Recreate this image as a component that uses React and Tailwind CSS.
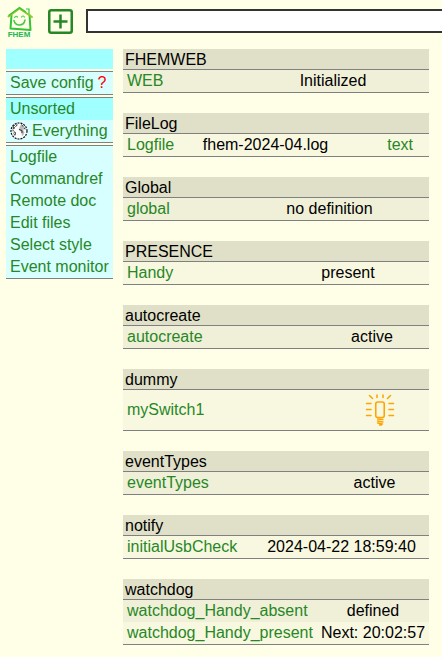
const groups = [
  { title: "FHEMWEB", col: "w-[192px]", rows: [{ name: "WEB", state: "Initialized" }] },
  { title: "FileLog", col: "w-[173px]", rows: [{ name: "Logfile", state: "fhem-2024-04.log", link: "text" }] },
  { title: "Global", col: "w-[199px]", rows: [{ name: "global", state: "no definition" }] },
  { title: "PRESENCE", col: "w-[162px]", rows: [{ name: "Handy", state: "present" }] },
  { title: "autocreate", col: "w-[114px]", rows: [{ name: "autocreate", state: "active" }] },
  { title: "dummy", col: "w-[98px]", rows: [{ name: "mySwitch1", bulb: true }] },
  { title: "eventTypes", col: "w-[109px]", rows: [{ name: "eventTypes", state: "active" }] },
  { title: "notify", col: "w-[175px]", rows: [{ name: "initialUsbCheck", state: "2024-04-22 18:59:40" }] },
  {
    title: "watchdog",
    col: "w-[112px]",
    rows: [
      { name: "watchdog_Handy_absent", state: "defined" },
      { name: "watchdog_Handy_present", state: "Next: 20:02:57" },
    ],
  },
];

function Logo() {
  return (
    <svg width="28" height="32" viewBox="0 0 28 32" fill="none" role="img" aria-label="FHEM">
      <path d="M4.500 9 L3.500 22.500 L23.500 24 L22.500 8.500" stroke="#35c435" strokeWidth="2" strokeLinejoin="round" />
      <path d="M1.500 10.500 L12.500 2.500 L25 11" stroke="#8fc92c" strokeWidth="2" strokeLinecap="round" strokeLinejoin="round" />
      <path d="M1.500 9.500 L12.500 1.500 L19 6 M19 3 H22 V8" stroke="#35c435" strokeWidth="1.200" />
      <path d="M7.500 11.500 Q9 9.500 10.500 11 M14.500 11 Q16 9 17.500 11" stroke="#55cf55" strokeWidth="1.200" strokeLinecap="round" />
      <path d="M7 14.500 Q8 19 12.500 19 Q17 19 18 14" stroke="#45ca45" strokeWidth="1.500" strokeLinecap="round" />
      <text x="12" y="31" textAnchor="middle" fill="#20b850" fontFamily="Liberation Sans, Arial, sans-serif" fontSize="8" fontWeight="bold">
        FHEM
      </text>
    </svg>
  );
}

function PlusBox() {
  return (
    <svg width="25" height="25" viewBox="0 0 25 25" fill="none" stroke="#278727" aria-hidden="true">
      <rect x="1.250" y="1.250" width="22.500" height="22.500" rx="2" strokeWidth="2.500" />
      <path d="M12.500 5.500 V19.500 M5.500 12.500 H19.500" strokeWidth="2.500" />
    </svg>
  );
}

function Globe() {
  return (
    <svg width="18" height="18" viewBox="0 0 18 18" aria-hidden="true">
      <circle cx="9" cy="9" r="8" fill="#fff" stroke="#111" strokeWidth="1.200" strokeDasharray="2 1" />
      <path d="M3 4 L5.500 2.500 L8 2.500 L7 4 L5 5 L4.500 7 L3 7 L4 9 L6 10.500 L6 12 L5 14 L3.500 12 L2.500 9 Z" fill="#555" />
      <path d="M4 5 L6 3 M3 9 L4.500 12" stroke="#fff" strokeWidth="1" />
      <path d="M10 3.500 L13 3 L15.500 6 L14.500 7 L13 8 L14.500 10 L13.500 13 L12 14 L11.500 11.500 L10.500 9 L8.500 7.500 L9.500 5.500 Z" fill="#bbb" />
      <path d="M11.500 2.500 L13 4.500 M9 7.500 L12 8.500 V11 M14 6.500 L15.500 7" stroke="#333" strokeWidth="1" fill="none" />
    </svg>
  );
}

function Bulb() {
  return (
    <svg width="32" height="32" viewBox="0 0 32 32" fill="none" stroke="#ffa500" strokeLinecap="round" className="mx-auto" aria-label="on" role="img">
      <rect x="11.750" y="8" width="8.500" height="15.500" rx="2" strokeWidth="1.600" />
      <path d="M13.500 25 L19 25.500 M13.500 27 L19 28 M13.500 29 L18.500 30 M15.500 31 H17.500" strokeWidth="1.300" />
      <path d="M2.500 9.500 H7 M2.500 15.500 H7 M2.500 21.500 H7 M25 9.500 H29.500 M25 15.500 H29.500 M25 21.500 H29.500" strokeWidth="1.500" />
      <path d="M5.500 1.500 L8.500 4.500 M26.500 1.500 L23.500 4.500 M13 1 V3.500 M19 1 V3.500" strokeWidth="1.600" />
    </svg>
  );
}

function MenuLink({ children, selected }) {
  return (
    <a href="#" className={selected ? "flex h-[22px] items-center gap-1 bg-[#a0ffff] px-1" : "flex h-[22px] items-center gap-1 px-1"}>
      {children}
    </a>
  );
}

const block = "border-y border-[#808080] bg-[#d7ffff]";

export default function App() {
  let index = 0;
  return (
    <div className="min-h-screen overflow-x-hidden bg-[#ffffe7] pb-3 font-['Liberation_Sans',Arial,sans-serif] text-base leading-[22px] text-black">
      <header className="flex h-[49px] items-start pl-[7px]">
        <a href="#" className="mt-[6px] shrink-0">
          <Logo />
        </a>
        <button type="button" aria-label="Add" className="mt-[9px] ml-[13px] shrink-0">
          <PlusBox />
        </button>
        <input
          type="text"
          aria-label="Command"
          className="-mr-1 mt-[9px] ml-[13px] h-6 min-w-0 flex-1 border-2 border-[#333333] bg-white px-1 outline-none"
        />
      </header>

      <div className="flex items-start gap-[10px] pr-[13px] pl-[6px]">
        <nav className="flex w-[107px] shrink-0 flex-col gap-[2px] whitespace-nowrap text-[#278727]">
          <div className="h-5 bg-[#a0ffff]" />
          <div className={block}>
            <MenuLink>
              Save config <span className="text-[#ff0000]">?</span>
            </MenuLink>
          </div>
          <div className={block}>
            <MenuLink selected>Unsorted</MenuLink>
            <MenuLink>
              <Globe />
              Everything
            </MenuLink>
          </div>
          <div className={block}>
            <MenuLink>Logfile</MenuLink>
            <MenuLink>Commandref</MenuLink>
            <MenuLink>Remote doc</MenuLink>
            <MenuLink>Edit files</MenuLink>
            <MenuLink>Select style</MenuLink>
            <MenuLink>Event monitor</MenuLink>
          </div>
        </nav>

        <main className="flex min-w-0 flex-1 flex-col gap-5">
          {groups.map((g) => (
            <section key={g.title}>
              <h2 className="h-5 bg-[#e0e0c8] px-[2px]">{g.title}</h2>
              <div className="border-y border-[#808080]">
                <table className="w-full table-fixed border-collapse whitespace-nowrap">
                  <tbody>
                    {g.rows.map((r) => {
                      const dark = index++ % 2 === 0;
                      return (
                        <tr key={r.name} className={dark ? "bg-[#f0f0d8]" : "bg-[#f8f8e0]"}>
                          <td className="px-1 py-0">
                            <a href="#" className="text-[#278727]">{r.name}</a>
                          </td>
                          <td className={`${g.col} p-0 text-center`}>
                            {r.bulb ? (
                              <button type="button" aria-label="Toggle mySwitch1" className="block w-full py-1">
                                <Bulb />
                              </button>
                            ) : (
                              r.state
                            )}
                          </td>
                          {r.link && (
                            <td className="w-[77px] py-0 pr-4 pl-0 text-right">
                              <a href="#" className="text-[#278727]">{r.link}</a>
                            </td>
                          )}
                        </tr>
                      );
                    })}
                  </tbody>
                </table>
              </div>
            </section>
          ))}
        </main>
      </div>
    </div>
  );
}
